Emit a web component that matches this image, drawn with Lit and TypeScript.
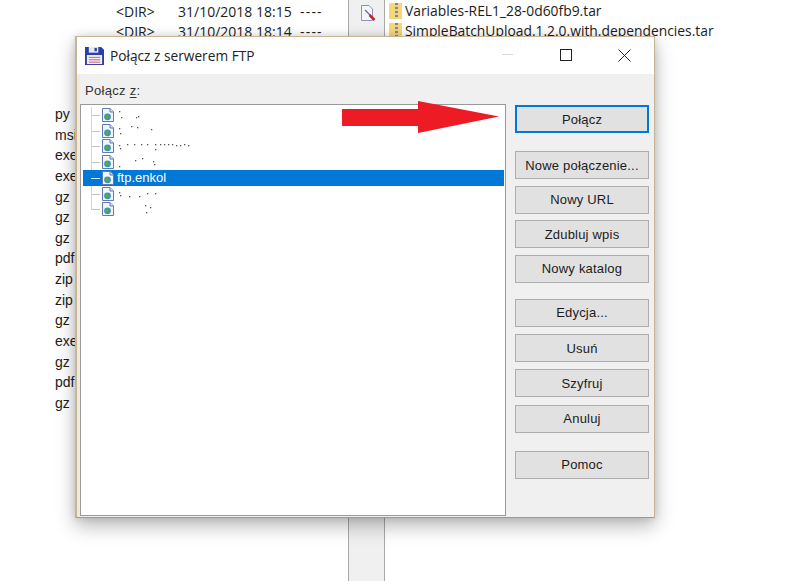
import { LitElement, html, css, svg } from "lit";
import { customElement } from "lit/decorators.js";

const exts = ["py","msi","exe","exe","gz","gz","gz","pdf","zip","zip","gz","exe","gz","pdf","gz"];
const topRows = [["<DIR>","31/10/2018 18:15","----"],["<DIR>","31/10/2018 18:14","----"]];
const archives = ["Variables-REL1_28-0d60fb9.tar","SimpleBatchUpload.1.2.0.with.dependencies.tar"];
const groups = [
  { kind: "tight", items: ["Nowe połączenie...","Nowy URL","Zdubluj wpis","Nowy katalog"] },
  { kind: "loose", items: ["Edycja...","Usuń","Szyfruj","Anuluj"] },
  { kind: "tight", items: ["Pomoc"] },
];

// Each row of the list: its label (or null when blurred away) and the specks of blur residue left behind
const tree: { label: string | null; specks: number[][] }[] = [
  { label: null, specks: [[2,0],[4,6],[19,6],[21,5]] },
  { label: null, specks: [[2,1],[3,6],[14,-1],[20,0],[34,2]] },
  { label: null, specks: [[2,3],[3,6],[10,2],[17,2],[24,2],[30,2],[38,2],[43,2],[47,2],[51,2],[55,2],[59,3],[63,3],[67,2],[71,3],[38,7]] },
  { label: null, specks: [[2,8],[18,2],[25,0],[36,3],[37,6]] },
  { label: "ftp.enkol", specks: [] },
  { label: null, specks: [[2,2],[3,5],[12,6],[22,6],[30,3],[38,3]] },
  { label: null, specks: [[28,0],[33,2],[29,7]] },
];

const fileIcon = svg`<svg class="node-icon" viewBox="0 0 12 14" width="12" height="14">
  <path d="M.5.5H8L11.500 4V13.500H.5Z" fill="#f2f5fc" stroke="#5f7bb5"/>
  <path d="M8 .5V4H11.500" fill="#d5dff2" stroke="#5f7bb5"/>
  <circle cx="5.500" cy="8.800" r="3.400" fill="#3a93b8"/>
  <path d="M3.200 7.800 5.500 6.500 6.800 8.500 5.200 11 3.300 9.800Z" fill="#63ab2f"/>
</svg>`;

@customElement("app-root")
export class AppRoot extends LitElement {
  static styles = css`
    :host {
      display: block;
      position: relative;
      width: 800px;
      height: 581px;
      overflow: hidden;
      background: #fff;
      color: #1c1c1c;
      font-family: "Open Sans", "Liberation Sans", sans-serif;
    }
    .desktop { display: block; width: 800px; height: 581px; }
    .dirs {
      display: grid;
      grid-template-columns: 62px 122px 40px;
      grid-auto-rows: 20px;
      font-size: 14px;
      line-height: 20px;
      padding: 2px 0 0 116px;
      width: 232px;
    }
    .dash { letter-spacing: 1.200px; }
    .exts {
      font-family: "Liberation Sans", sans-serif;
      font-size: 14px;
      line-height: 20.640px;
      padding: 62px 0 0 55px;
      width: 50px;
    }
    .strip {
      position: absolute;
      left: 348px;
      top: 0;
      width: 35px;
      height: 581px;
      background: #f0f0f0;
      border: solid #a9a9a9;
      border-width: 0 1px;
    }
    .strip svg { display: block; margin: 4px 0 0 11px; }
    .archives {
      position: absolute;
      left: 389px;
      top: 1px;
      font-size: 13.850px;
      line-height: 20px;
      white-space: nowrap;
    }
    .archive { display: flex; align-items: center; gap: 3px; height: 20px; }
    .zip {
      width: 13px;
      height: 16px;
      flex: none;
      background:
        repeating-linear-gradient(180deg, #8d8a70 0 2px, #d8d2a8 2px 4px) 6px 0 / 3px 100% no-repeat,
        #f6d77c;
    }

    .window {
      position: absolute;
      left: 75px;
      top: 36px;
      box-sizing: border-box;
      width: 580px;
      height: 482px;
      background: #f0f0f0;
      border: 1px solid #c5b596;
      border-left-width: 2px;
      border-bottom-color: #a8987e;
      box-shadow: 0 8px 18px rgba(0, 0, 0, 0.28), 0 0 8px rgba(0, 0, 0, 0.12);
      display: flex;
      flex-direction: column;
    }
    .titlebar {
      height: 36px;
      flex: none;
      background: #fff;
      display: flex;
      align-items: center;
      padding: 0 7px 1px 8px;
      font-size: 13.700px;
      color: #222;
    }
    .titlebar .app { margin-right: 6px; flex: none; }
    .titlebar .title { flex: 1; }
    .ctl { width: 46px; height: 36px; flex: none; display: flex; align-items: center; justify-content: center; }
    .ctl + .ctl { margin-left: 12px; }
    .body {
      flex: 1;
      display: flex;
      padding: 0 5px 1px 3px;
      background: linear-gradient(90deg, #f1e9dc 0 3px, #f0f0f0 3px);
    }
    .left { width: 426px; display: flex; flex-direction: column; flex: none; }
    .label {
      font-family: "Liberation Sans", sans-serif;
      font-size: 13px;
      letter-spacing: 0.300px;
      line-height: 16px;
      height: 30px;
      padding: 9px 0 0 5px;
      box-sizing: border-box;
      color: #333;
    }
    .label u { text-underline-offset: 2px; }
    .list {
      flex: 1;
      box-sizing: border-box;
      background: #fff;
      border: 1px solid #9a9a9a;
      padding: 2px 1px 0 2px;
    }
    .node {
      position: relative;
      height: 15.750px;
      display: flex;
      align-items: center;
      padding-left: 19px;
      gap: 3px;
      font-family: "Liberation Sans", sans-serif;
      font-size: 13px;
      color: #222;
    }
    .node::before {
      content: "";
      position: absolute;
      left: 8px;
      top: 50%;
      width: 9px;
      border-top: 1px solid #c4c4c4;
    }
    .node::after {
      content: "";
      position: absolute;
      left: 8px;
      top: 0;
      bottom: 0;
      border-left: 1px solid #d4d4d4;
    }
    .node:last-child::after { bottom: 50%; }
    .node.on { background: #0078d7; color: #fff; }
    .node.on::before { border-color: #d5e6f5; }
    .node.on::after { display: none; }
    .node-icon { flex: none; position: relative; z-index: 1; }
    .specks { display: block; flex: none; }
    .right {
      width: 134px;
      margin-left: 9px;
      padding-top: 31px;
      display: flex;
      flex-direction: column;
    }
    button {
      display: block;
      width: 134px;
      height: 28px;
      margin: 0;
      padding: 0;
      background: #e1e1e1;
      border: 1px solid #adadad;
      color: #1c1c1c;
      font-family: "Liberation Sans", sans-serif;
      font-size: 13px;
      letter-spacing: 0.200px;
    }
    .primary { border: 2px solid #0078d7; margin-bottom: 18px; }
    .group { display: flex; flex-direction: column; }
    .tight { gap: 6.600px; margin-bottom: 16.200px; }
    .loose { gap: 7.200px; margin-bottom: 18.400px; }
    .arrow { position: absolute; left: 342px; top: 101px; }
  `;

  render() {
    return html`
      <div class="desktop">
        <div class="dirs">
          ${topRows.map((r) => html`<span>${r[0]}</span><span>${r[1]}</span><span class="dash">${r[2]}</span>`)}
        </div>
        <div class="exts">${exts.map((e) => html`<div>${e}</div>`)}</div>
      </div>
      <div class="strip">
        <svg width="16" height="18" viewBox="0 0 16 18">
          <path d="M1.500 1.500H9L12.500 5V16.500H1.500Z" fill="#f4f6fb" stroke="#8b94b8"/>
          <path d="M5 6 10 11" stroke="#5a6ea8" stroke-width="1.200"/>
          <path d="M9.500 11 14.500 16" stroke="#c8202c" stroke-width="2.500"/>
        </svg>
      </div>
      <div class="archives">
        ${archives.map((a) => html`<div class="archive"><span class="zip"></span><span>${a}</span></div>`)}
      </div>

      <div class="window">
        <div class="titlebar">
          <svg class="app" width="19" height="19" viewBox="0 0 20 20">
            <path d="M0 1H17L20 4V20H0Z" fill="#2c3fa5"/>
            <rect x="4" y="1" width="10" height="6" fill="#e6e8f4"/>
            <rect x="10" y="2" width="2.500" height="3.500" fill="#2c3fa5"/>
            <rect x="2" y="9.500" width="16" height="9.500" fill="#f6ecf2"/>
            <path d="M4 12H16M4 14.500H16M4 17H16" stroke="#c04a7a" stroke-width="0.900"/>
          </svg>
          <span class="title">Połącz z serwerem FTP</span>
          <span class="ctl"><svg width="12" height="2"><path d="M0 .5H11" stroke="#d8d8d8"/></svg></span>
          <span class="ctl"><svg width="12" height="12"><rect x=".5" y=".5" width="11" height="11" fill="none" stroke="#222"/></svg></span>
          <span class="ctl"><svg width="13" height="13"><path d="M.5 .5 12.500 12.500M12.500 .5 .5 12.500" stroke="#222"/></svg></span>
        </div>
        <div class="body">
          <div class="left">
            <div class="label">Połącz <u>z</u>:</div>
            <div class="list">
              ${tree.map(
                (n) => html`<div class="node ${n.label ? "on" : ""}">
                  ${fileIcon}
                  ${n.label ??
                  html`<svg class="specks" width="80" height="12">
                    ${n.specks.map(([x, y]) => svg`<rect x=${x} y=${y + 2} width="1.300" height="1.300" fill="#555"/>`)}
                  </svg>`}
                </div>`
              )}
            </div>
          </div>
          <div class="right">
            <button class="primary">Połącz</button>
            ${groups.map(
              (g) => html`<div class="group ${g.kind === "tight" ? "tight" : "loose"}">${g.items.map((b) => html`<button>${b}</button>`)}</div>`
            )}
          </div>
        </div>
      </div>

      <svg class="arrow" width="158" height="33" viewBox="0 0 158 33">
        <path d="M0 8H76V0L157 15.500 76 32V25H0Z" fill="#ed1c24"/>
      </svg>
    `;
  }
}
